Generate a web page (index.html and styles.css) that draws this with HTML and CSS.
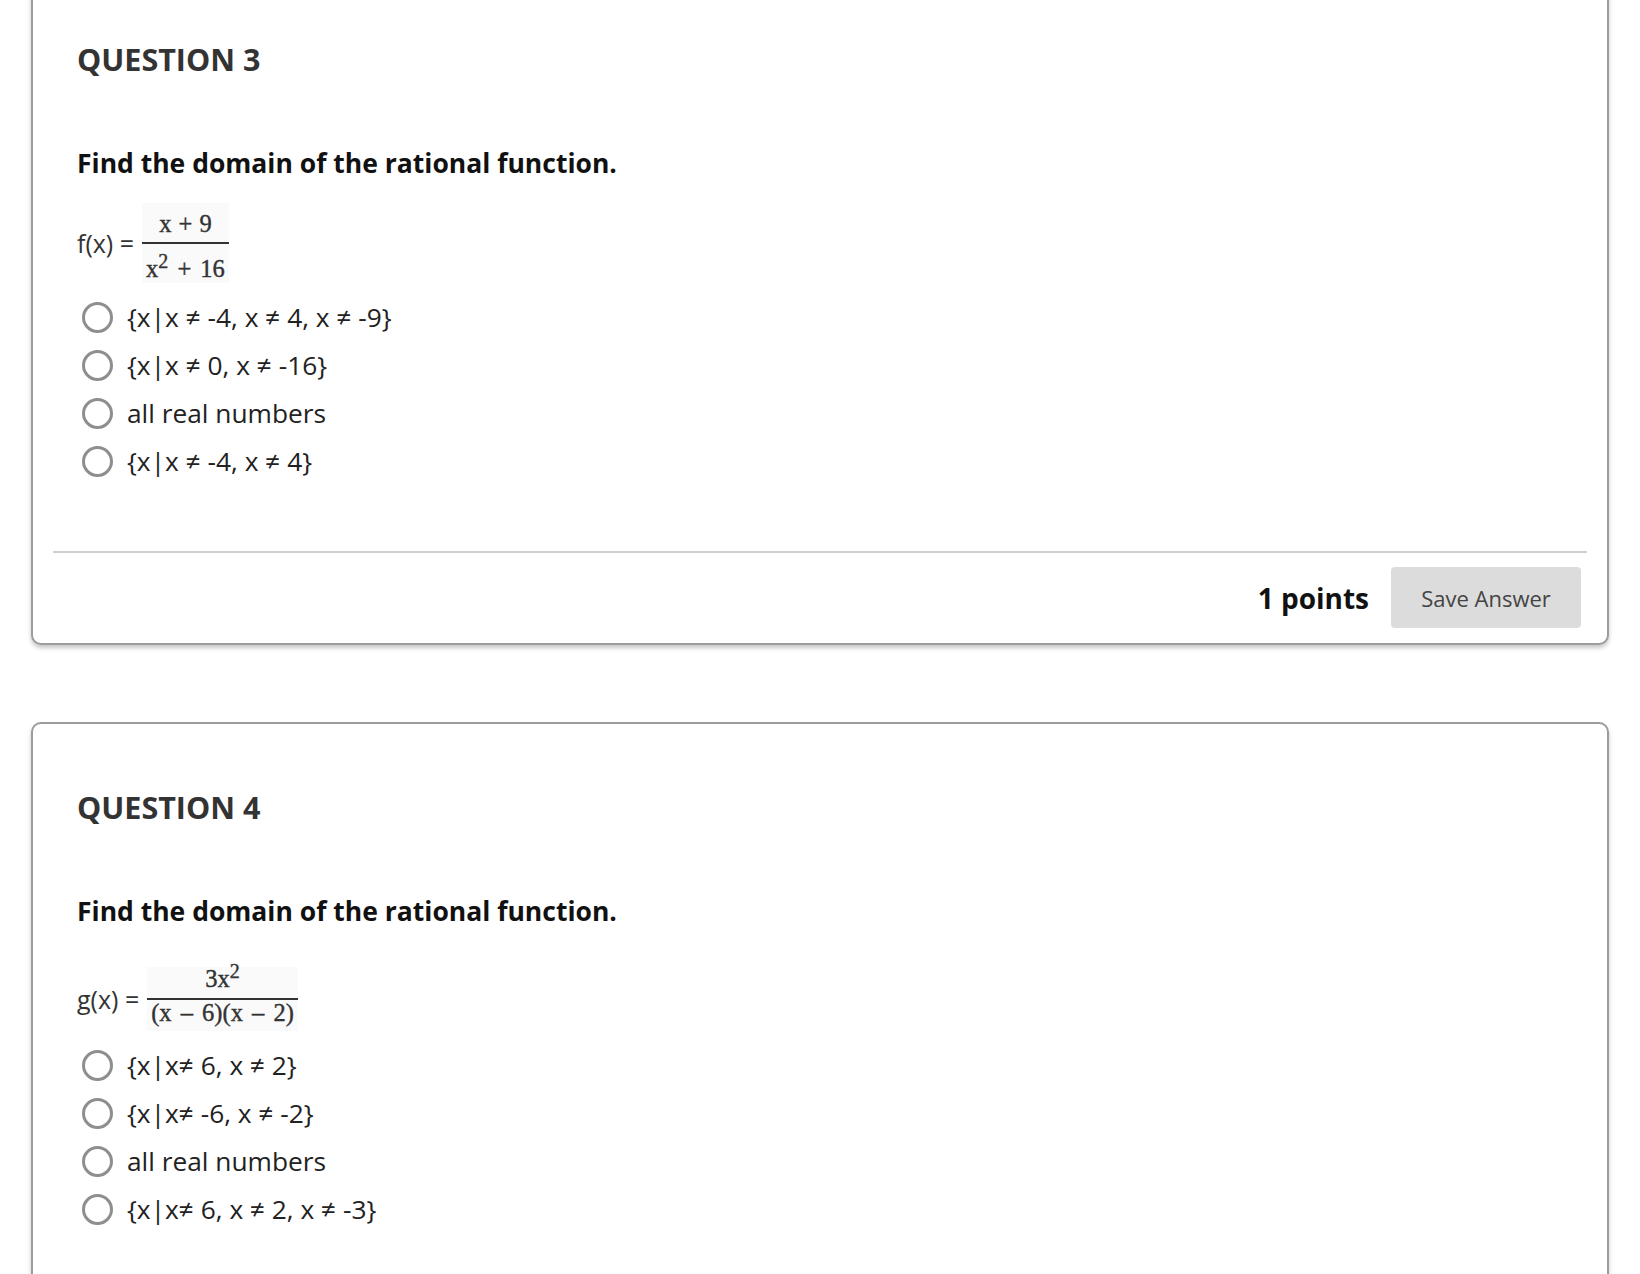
FILE: index.html
```html
<!DOCTYPE html>
<html lang="en">
<head>
    <meta charset="UTF-8">
    <meta name="viewport" content="width=device-width, initial-scale=1.0">
    <title>Test - Rational Functions</title>
    <link rel="stylesheet" href="styles.css">
</head>
<body>
    <main class="test-page">

        <section class="question-card question-card-first">
            <h2 class="question-title">QUESTION 3</h2>
            <div class="question-body">
                <p class="question-text">Find the domain of the rational function.</p>
                <div class="formula formula-q3">
                    <span class="formula-label">f(x) =</span>
                    <span class="fraction fraction-q3">
                        <span class="frac-num">x + 9</span>
                        <span class="frac-den">x<sup>2</sup> + 16</span>
                    </span>
                </div>
                <ul class="answers">
                    <li class="answer"><span class="radio"></span><span>{x|x ≠ -4, x ≠ 4, x ≠ -9}</span></li>
                    <li class="answer"><span class="radio"></span><span>{x|x ≠ 0, x ≠ -16}</span></li>
                    <li class="answer"><span class="radio"></span><span>all real numbers</span></li>
                    <li class="answer"><span class="radio"></span><span>{x|x ≠ -4, x ≠ 4}</span></li>
                </ul>
            </div>
            <div class="question-footer">
                <span class="points">1 points</span>
                <button class="save-btn">Save Answer</button>
            </div>
        </section>

        <section class="question-card question-card-last">
            <h2 class="question-title">QUESTION 4</h2>
            <div class="question-body">
                <p class="question-text">Find the domain of the rational function.</p>
                <div class="formula formula-q4">
                    <span class="formula-label">g(x) =</span>
                    <span class="fraction fraction-q4">
                        <span class="frac-num">3x<sup>2</sup></span>
                        <span class="frac-den">(x – 6)(x – 2)</span>
                    </span>
                </div>
                <ul class="answers">
                    <li class="answer"><span class="radio"></span><span>{x|x≠ 6, x ≠ 2}</span></li>
                    <li class="answer"><span class="radio"></span><span>{x|x≠ -6, x ≠ -2}</span></li>
                    <li class="answer"><span class="radio"></span><span>all real numbers</span></li>
                    <li class="answer"><span class="radio"></span><span>{x|x≠ 6, x ≠ 2, x ≠ -3}</span></li>
                </ul>
            </div>
        </section>

    </main>
</body>
</html>
```

FILE: styles.css
```css
body {
    margin: 0;
    background: #fff;
    font-family: "Open Sans", "Liberation Sans", sans-serif;
    color: #222;
}

.test-page {
    padding: 0 31px 0 31px;
}

.question-card {
    margin-top: 77px;
    padding: 63px 20px 0 20px;
    border: 2px solid #9c9c9c;
    border-radius: 10px;
    background: #fff;
    box-shadow: 0 3px 4px rgba(0, 0, 0, 0.22);
}

.question-card-first {
    margin-top: -26px;
}

.question-card-last {
    padding-bottom: 160px;
}

.question-title {
    margin: 0;
    padding-left: 24px;
    font-size: 30.5px;
    line-height: 40px;
    font-weight: 700;
    color: #333;
}

.question-body {
    padding-left: 24px;
}

.question-text {
    margin: 68px 0 0 0;
    font-size: 26.5px;
    line-height: 32px;
    font-weight: 700;
    color: #111;
}

/* formula row: label + stacked fraction */
.formula {
    display: flex;
    align-items: center;
    gap: 8px;
}

.formula-q3 {
    margin: 24px 0 10px 0;
}

.formula-q4 {
    margin: 40px 0 10px 0;
}

.formula-label {
    font-size: 25px;
    line-height: 30px;
    color: #333;
}

.fraction {
    display: inline-flex;
    flex-direction: column;
    align-items: center;
    font-family: "Liberation Serif", "DejaVu Serif", serif;
    font-size: 24.5px;
    line-height: 24px;
    color: #333;
    -webkit-text-stroke: 0.4px #333;
    background: #fafafa;
}

.fraction sup {
    font-size: 20px;
    line-height: 0;
    vertical-align: 9px;
}

.frac-num {
    padding: 0 4px;
}

.frac-den {
    border-top: 2px solid #333;
    padding: 0 4px;
}

.fraction-q3 .frac-num {
    padding-top: 9px;
    padding-bottom: 6px;
    word-spacing: 1px;
}

.fraction-q3 .frac-den {
    padding-top: 13px;
    padding-bottom: 2px;
    word-spacing: 3px;
}

.fraction-q4 .frac-num {
    padding-bottom: 7px;
}

.fraction-q4 .frac-den {
    padding-top: 1px;
    padding-bottom: 6px;
    word-spacing: 3px;
}

/* answer options */
.answers {
    list-style: none;
    margin: 0;
    padding: 0 0 0 5px;
}

.answer {
    display: flex;
    align-items: center;
    gap: 14px;
    height: 48px;
    font-size: 26.3px;
    color: #222;
}

.radio {
    width: 31px;
    height: 31px;
    box-sizing: border-box;
    border: 3px solid #8e8e8e;
    border-radius: 50%;
    flex-shrink: 0;
}

.question-footer {
    display: flex;
    justify-content: flex-end;
    align-items: center;
    gap: 22px;
    margin-top: 66px;
    padding: 14px 6px 15px 6px;
    border-top: 2px solid #d0d0d0;
}

.points {
    font-size: 28px;
    font-weight: 700;
    color: #111;
}

.save-btn {
    width: 190px;
    height: 61px;
    border: none;
    border-radius: 4px;
    background: #dcdcdc;
    font-family: "Open Sans", "Liberation Sans", sans-serif;
    font-size: 22px;
    color: #444;
    cursor: pointer;
}
```
